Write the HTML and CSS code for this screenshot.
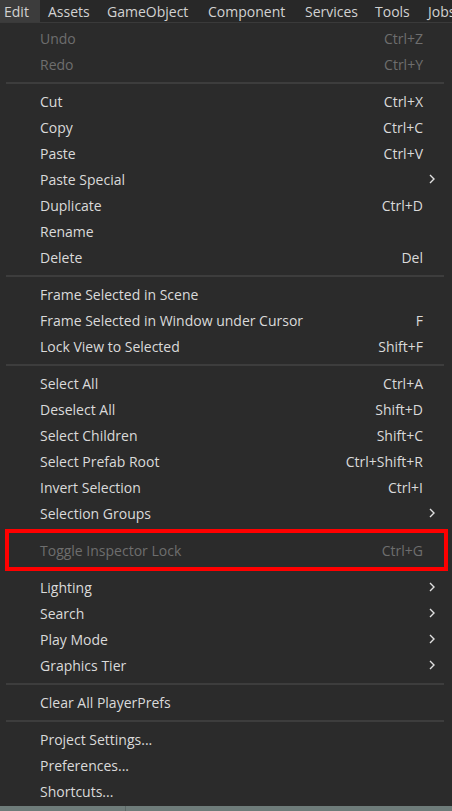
FILE: index.html
```html
<!DOCTYPE html>
<html>
<head>
<meta charset="utf-8">
<link rel="stylesheet" href="styles.css">
</head>
<body>
<div class="menubar">
  <span class="mb-item w-edit active">Edit</span>
  <span class="mb-item w-assets">Assets</span>
  <span class="mb-item w-go">GameObject</span>
  <span class="mb-item w-comp">Component</span>
  <span class="mb-item w-serv">Services</span>
  <span class="mb-item w-tools">Tools</span>
  <span class="mb-item w-jobs">Jobs</span>
</div>
<div class="menu">
  <div class="row disabled"><span class="label">Undo</span><span class="key">Ctrl+Z</span></div>
  <div class="row disabled"><span class="label">Redo</span><span class="key">Ctrl+Y</span></div>
  <div class="sep"></div>
  <div class="row"><span class="label">Cut</span><span class="key">Ctrl+X</span></div>
  <div class="row"><span class="label">Copy</span><span class="key">Ctrl+C</span></div>
  <div class="row"><span class="label">Paste</span><span class="key">Ctrl+V</span></div>
  <div class="row"><span class="label">Paste Special</span><span class="key"></span><span class="chev"><svg width="6" height="10" viewBox="0 0 6 10"><path d="M1 1 L5 5 L1 9" fill="none" stroke="#e0e0e0" stroke-width="1.4"/></svg></span></div>
  <div class="row"><span class="label">Duplicate</span><span class="key">Ctrl+D</span></div>
  <div class="row"><span class="label">Rename</span><span class="key"></span></div>
  <div class="row"><span class="label">Delete</span><span class="key">Del</span></div>
  <div class="sep"></div>
  <div class="row"><span class="label">Frame Selected in Scene</span><span class="key"></span></div>
  <div class="row"><span class="label">Frame Selected in Window under Cursor</span><span class="key">F</span></div>
  <div class="row"><span class="label">Lock View to Selected</span><span class="key">Shift+F</span></div>
  <div class="sep"></div>
  <div class="row"><span class="label">Select All</span><span class="key">Ctrl+A</span></div>
  <div class="row"><span class="label">Deselect All</span><span class="key">Shift+D</span></div>
  <div class="row"><span class="label">Select Children</span><span class="key">Shift+C</span></div>
  <div class="row"><span class="label">Select Prefab Root</span><span class="key">Ctrl+Shift+R</span></div>
  <div class="row"><span class="label">Invert Selection</span><span class="key">Ctrl+I</span></div>
  <div class="row"><span class="label">Selection Groups</span><span class="key"></span><span class="chev"><svg width="6" height="10" viewBox="0 0 6 10"><path d="M1 1 L5 5 L1 9" fill="none" stroke="#e0e0e0" stroke-width="1.4"/></svg></span></div>
  <div class="sep"></div>
  <div class="row disabled highlight"><span class="label">Toggle Inspector Lock</span><span class="key">Ctrl+G</span></div>
  <div class="sep"></div>
  <div class="row"><span class="label">Lighting</span><span class="key"></span><span class="chev"><svg width="6" height="10" viewBox="0 0 6 10"><path d="M1 1 L5 5 L1 9" fill="none" stroke="#e0e0e0" stroke-width="1.4"/></svg></span></div>
  <div class="row"><span class="label">Search</span><span class="key"></span><span class="chev"><svg width="6" height="10" viewBox="0 0 6 10"><path d="M1 1 L5 5 L1 9" fill="none" stroke="#e0e0e0" stroke-width="1.4"/></svg></span></div>
  <div class="row"><span class="label">Play Mode</span><span class="key"></span><span class="chev"><svg width="6" height="10" viewBox="0 0 6 10"><path d="M1 1 L5 5 L1 9" fill="none" stroke="#e0e0e0" stroke-width="1.4"/></svg></span></div>
  <div class="row"><span class="label">Graphics Tier</span><span class="key"></span><span class="chev"><svg width="6" height="10" viewBox="0 0 6 10"><path d="M1 1 L5 5 L1 9" fill="none" stroke="#e0e0e0" stroke-width="1.4"/></svg></span></div>
  <div class="sep"></div>
  <div class="row"><span class="label">Clear All PlayerPrefs</span><span class="key"></span></div>
  <div class="sep"></div>
  <div class="row"><span class="label">Project Settings...</span><span class="key"></span></div>
  <div class="row"><span class="label">Preferences...</span><span class="key"></span></div>
  <div class="row"><span class="label">Shortcuts...</span><span class="key"></span></div>
</div>
<div class="statusbar"><div class="sb-left"></div><div class="sb-right"></div></div>
</body>
</html>
```
FILE: styles.css
```css
html, body {
  margin: 0;
  padding: 0;
  background: #2b2b2b;
  height: 811px;
  overflow: hidden;
}
body {
  font-family: "Open Sans", "Noto Sans", sans-serif;
  font-size: 14px;
  color: #dadada;
  display: flex;
  flex-direction: column;
}
.menubar {
  height: 22px;
  flex: none;
  display: flex;
  align-items: stretch;
  background: #282828;
  border-bottom: 1px solid #3a3a3a;
  white-space: nowrap;
  overflow: hidden;
}
.mb-item {
  display: flex;
  align-items: center;
  padding-left: 4px;
  flex: none;
  box-sizing: border-box;
  color: #d2d2d2;
}
.mb-item.active {
  background: #3c3c3c;
}
.w-edit { width: 40px; }
.w-assets { width: 63px; padding-left: 8px; }
.w-go { width: 101px; }
.w-comp { width: 97px; }
.w-serv { width: 70px; }
.w-tools { width: 53px; }
.w-jobs { flex: 1; }
.menu {
  flex: 1;
  padding-top: 2px;
  display: flex;
  flex-direction: column;
}
.row {
  height: 26px;
  flex: none;
  display: flex;
  align-items: center;
  padding-left: 40px;
  padding-right: 29px;
  position: relative;
  white-space: nowrap;
}
.label {
  flex: 1;
}
.key {
  flex: none;
  text-align: right;
}
.chev {
  position: absolute;
  left: 429px;
  top: 8px;
  width: 6px;
  height: 10px;
  display: flex;
}
.disabled {
  color: #6e6e6e;
}
.sep {
  height: 11px;
  flex: none;
  display: flex;
  align-items: center;
  padding-left: 6px;
  padding-right: 8px;
}
.sep::before {
  content: "";
  flex: 1;
  height: 2px;
  background: #3d3d3d;
}
.highlight::after {
  content: "";
  position: absolute;
  left: 5px;
  right: 4px;
  top: -8px;
  bottom: -8px;
  border: 4px solid #ff0000;
  box-sizing: border-box;
}
.statusbar {
  height: 5px;
  flex: none;
  display: flex;
  background: #6e7c7a;
}
.sb-left {
  width: 125px;
  border-right: 1px solid #5c6866;
}
.sb-right {
  flex: 1;
}
```
